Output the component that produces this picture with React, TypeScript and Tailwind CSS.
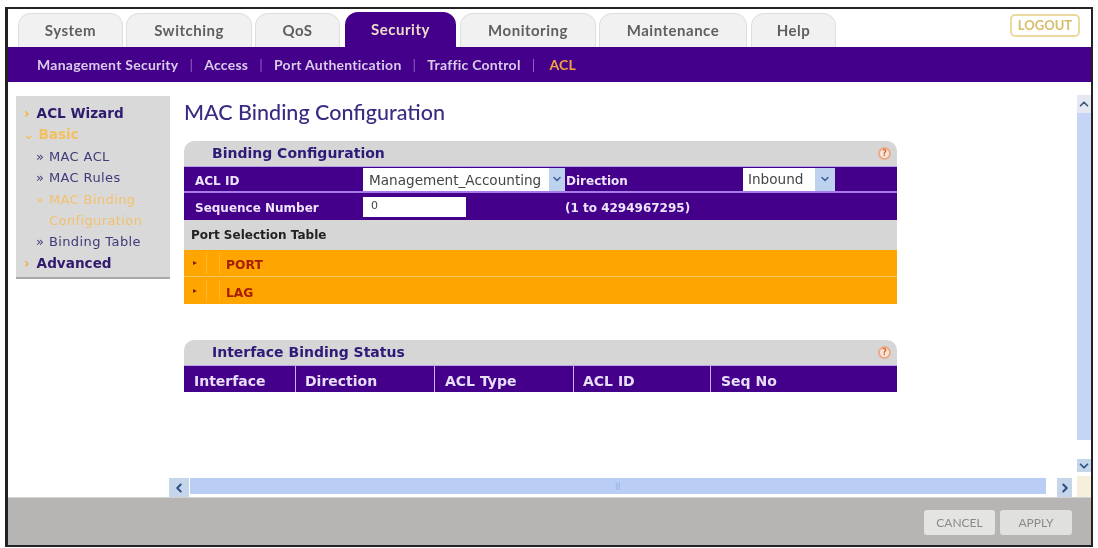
import { ChevronDown, ChevronLeft, ChevronRight, ChevronUp } from "lucide-react";

const tabs = [
  { label: "System", cls: "w-[105px]" },
  { label: "Switching", cls: "w-[126px] ml-[3px]" },
  { label: "QoS", cls: "w-[85px] ml-[3px]" },
  { label: "Security", cls: "w-[111px] ml-[5px]", active: true },
  { label: "Monitoring", cls: "w-[136px] ml-[4px]" },
  { label: "Maintenance", cls: "w-[148px] ml-[3px]" },
  { label: "Help", cls: "w-[85px] ml-[4px]" },
];

const subnav = ["Management Security", "Access", "Port Authentication", "Traffic Control"];

const sideFont = "font-['DejaVu_Sans',sans-serif]";

function HelpIcon() {
  return (
    <span className="w-[13px] h-[13px] rounded-full border-2 border-[#eda98a] bg-[#f6e6da] flex items-center justify-center text-[8px] font-bold leading-none text-[#d9622c]">
      ?
    </span>
  );
}

function PanelHeader({ title }: { title: string }) {
  return (
    <div className={"h-[26px] bg-[#d6d6d6] rounded-t-[10px] flex items-center pl-[28px] pr-[6px] justify-between border-b border-[#b9a3e8] " + sideFont}>
      <span className="text-[14px] font-bold text-[#2f1a78]">{title}</span>
      <HelpIcon />
    </div>
  );
}

function OrangeRow({ label }: { label: string }) {
  return (
    <div className="h-[27px] bg-[#ffa500] flex items-center border-b border-[#ffc65a] last:border-b-0">
      <span className="w-[22px] pl-[9px] text-[8px] leading-none text-[#7a1f00]">▸</span>
      <span className="w-[14px] h-[21px] border-l border-r border-[#ffb733]" />
      <span className="ml-[6px] pt-[5px] text-[12.3px] font-bold text-[#a81c00]">{label}</span>
    </div>
  );
}

export default function App() {
  return (
    <div className="w-[1098px] h-[548px] bg-white pt-[7px] px-[5px] overflow-hidden font-['Lato',sans-serif] blur-[0.6px]">
      <div className="w-[1088px] h-[540px] border-[2px] border-l-[3px] border-[#222] flex flex-col">
        {/* top tabs */}
        <div className="h-[38px] flex items-end pl-[10px] pr-[11px] bg-white">
          {tabs.map((t) => (
            <div
              key={t.label}
              className={
                t.cls +
                " flex items-center justify-center rounded-t-[13px] text-[15px] tracking-[0.5px] " +
                (t.active
                  ? "h-[35px] bg-[#44008b] text-[#ecdcc8] font-bold"
                  : "h-[34px] bg-[#f1f1f1] border border-b-0 border-[#dedede] text-[#5f5f5f] font-bold")
              }
            >
              {t.label}
            </div>
          ))}
          <div className="ml-auto mb-[10px] w-[70px] h-[23px] border-2 border-[#ecd9a0] rounded-[5px] flex items-center justify-center text-[13px] font-bold text-[#d6bd6a]">
            LOGOUT
          </div>
        </div>

        {/* sub nav */}
        <div className="h-[35px] bg-[#44008b] flex items-center pl-[29px] text-[14px] tracking-[0.25px] font-bold text-[#d9cce8]">
          {subnav.map((s) => (
            <span key={s} className="flex items-center">
              {s}
              <span className="mx-[11px] font-normal text-[#8b63c0]">|</span>
            </span>
          ))}
          <span className="ml-[3px] text-[#f3a33c]">ACL</span>
        </div>

        <div className="flex-1 flex min-h-0">
          <div className="flex-1 flex flex-col min-w-0">
            <div className="flex-1 flex min-h-0">
              {/* side menu */}
              <div className={"ml-[8px] mt-[14px] w-[154px] h-[183px] bg-[#d9d9d9] border-b-2 border-[#a9a9a9] pt-[7px] leading-[21.4px] " + sideFont}>
                <div className="pl-[8px] text-[13.6px] font-bold text-[#2f1a6e]"><span className="text-[#f3b13c] mr-[7px]">›</span>ACL Wizard</div>
                <div className="pl-[7px] text-[13.6px] font-bold text-[#f3c060]"><span className="mr-[4px]">⌄</span>Basic</div>
                <div className="pl-[20px] text-[13px] tracking-[0.4px] text-[#3f3a78]">» MAC ACL</div>
                <div className="pl-[20px] text-[13px] tracking-[0.4px] text-[#3f3a78]">» MAC Rules</div>
                <div className="pl-[20px] text-[13px] tracking-[0.4px] text-[#f2c16e]">» MAC Binding</div>
                <div className="pl-[33px] text-[13px] tracking-[0.4px] text-[#f2c16e]">Configuration</div>
                <div className="pl-[20px] text-[13px] tracking-[0.4px] text-[#3f3a78]">» Binding Table</div>
                <div className="pl-[8px] text-[13.6px] font-bold text-[#2f1a6e]"><span className="text-[#f3b13c] mr-[7px]">›</span>Advanced</div>
              </div>

              {/* main */}
              <div className="ml-[14px] w-[713px]">
                <h1 className="h-[59px] pt-[16px] text-[21.5px] font-medium leading-[28px] text-[#3b2a82]">MAC Binding Configuration</h1>

                <PanelHeader title="Binding Configuration" />
                <div className={"bg-[#44008b] text-white text-[12px] font-bold " + sideFont}>
                  <div className="h-[26px] flex items-center border-b-2 border-[#a77be8]">
                    <span className="w-[179px] pl-[11px] pt-[4px] text-[#ece4f8]">ACL ID</span>
                    <div className="w-[202px] h-[23px] bg-white flex items-center pl-[6px] text-[13.6px] font-normal text-[#444] justify-between">
                      <span className="pt-[3px]">Management_Accounting</span>
                      <span className="w-[16px] h-full bg-[#bcd2ee] flex items-center justify-center">
                        <ChevronDown size={12} strokeWidth={3} className="text-[#3d5f94]" />
                      </span>
                    </div>
                    <span className="w-[178px] pl-[1px] pt-[4px] text-[#ece4f8]">Direction</span>
                    <div className="w-[92px] h-[23px] bg-white flex items-center pl-[5px] text-[13.6px] font-normal text-[#444] justify-between">
                      Inbound
                      <span className="w-[20px] h-full bg-[#bcd2ee] flex items-center justify-center">
                        <ChevronDown size={12} strokeWidth={3} className="text-[#3d5f94]" />
                      </span>
                    </div>
                  </div>
                  <div className="h-[27px] flex items-center">
                    <span className="w-[179px] pl-[11px] pt-[3px] text-[#ece4f8]">Sequence Number</span>
                    <div className="w-[103px] h-[20px] bg-white flex items-center pl-[8px] text-[11px] font-normal text-[#444]">0</div>
                    <span className="ml-[99px] pt-[3px] text-[#ece4f8]">(1 to 4294967295)</span>
                  </div>
                </div>
                <div className={"h-[30px] bg-[#d6d6d6] flex items-center pl-[7px] text-[12px] font-bold text-[#222] " + sideFont}>
                  Port Selection Table
                </div>
                <div className={sideFont}>
                  <OrangeRow label="PORT" />
                  <OrangeRow label="LAG" />
                </div>

                <div className="h-[36px]" />
                <PanelHeader title="Interface Binding Status" />
                <div className={"h-[26px] bg-[#44008b] flex items-center text-[14px] font-bold text-[#e6def5] " + sideFont}>
                  <span className="w-[112px] h-full flex items-center pl-[10px] pt-[4px] border-r border-[#c9b5ee]">Interface</span>
                  <span className="w-[139px] h-full flex items-center pl-[9px] pt-[4px] border-r border-[#c9b5ee]">Direction</span>
                  <span className="w-[139px] h-full flex items-center pl-[10px] pt-[4px] border-r border-[#c9b5ee]">ACL Type</span>
                  <span className="w-[137px] h-full flex items-center pl-[9px] pt-[4px] border-r border-[#c9b5ee]">ACL ID</span>
                  <span className="flex-1 h-full flex items-center pl-[10px] pt-[4px]">Seq No</span>
                </div>
              </div>
            </div>

            {/* horizontal scrollbar */}
            <div className="h-[19px] ml-[161px] flex items-start">
              <span className="w-[20px] h-[19px] bg-[#c5d6ea] flex items-center justify-center">
                <ChevronLeft size={14} strokeWidth={3.5} className="text-[#2f4f86]" />
              </span>
              <span className="w-[856px] h-[16px] ml-[1px] bg-[#b9cdf5] flex items-center justify-center text-[7px] text-[#8ea6d6]">|||</span>
              <span className="w-[15px] h-[19px] ml-[11px] bg-[#c5d6ea] flex items-center justify-center">
                <ChevronRight size={14} strokeWidth={3.5} className="text-[#2f4f86]" />
              </span>
            </div>
          </div>

          {/* vertical scrollbar */}
          <div className="w-[14px] flex flex-col">
            <span className="mt-[13px] h-[18px] bg-[#e3e8f2] flex items-center justify-center">
              <ChevronUp size={14} strokeWidth={3} className="text-[#3d5878]" />
            </span>
            <span className="h-[327px] bg-[#c6d4f6]" />
            <span className="h-[19px]" />
            <span className="h-[13px] bg-[#c5d6ea] flex items-center justify-center">
              <ChevronDown size={14} strokeWidth={3} className="text-[#2f4f86]" />
            </span>
            <span className="flex-1 mt-[4px] bg-[#f5efdc]" />
          </div>
        </div>

        {/* footer */}
        <div className="h-[48px] bg-[#b6b5b3] border-t border-[#d2d2d0] flex items-start justify-end pt-[12px] pr-[19px] text-[12px] text-[#8a8a8a]">
          <div className="w-[71px] h-[25px] bg-[#e4e4e2] rounded-[3px] flex items-center justify-center">CANCEL</div>
          <div className="w-[72px] h-[25px] ml-[5px] bg-[#e0e0de] rounded-[3px] flex items-center justify-center">APPLY</div>
        </div>
      </div>
    </div>
  );
}
